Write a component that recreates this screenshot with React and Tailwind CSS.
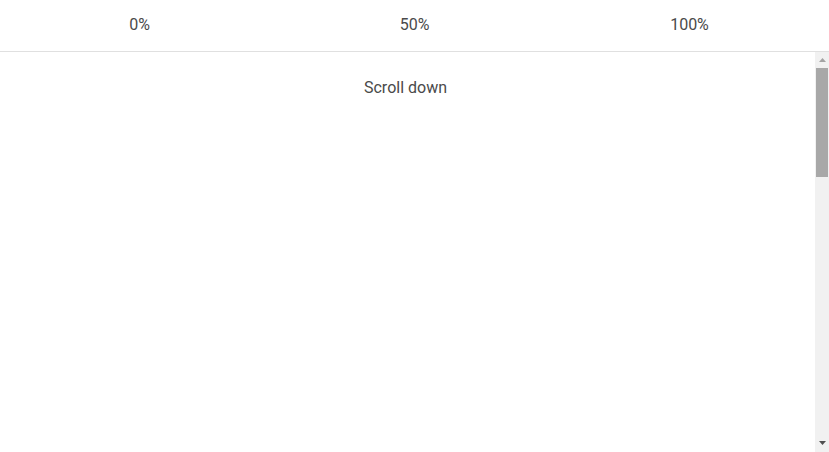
export default function App() {
  const marks = ['0%', '50%', '100%']

  return (
    <div className="h-[452px] w-full bg-white font-['Roboto',sans-serif] text-[#4a4a4a]">
      {/* Progress labels */}
      <div className="grid h-[52px] grid-cols-3 border-b border-[#e0e0e0] px-[2px] pb-[2px]">
        {marks.map(m => (
          <div key={m} className="flex items-center justify-center text-base">
            {m}
          </div>
        ))}
      </div>

      {/* Scroll area */}
      <div className="flex h-[400px]">
        <div className="flex-1 pr-[4px] pt-[24px] text-center text-base leading-6">
          Scroll down
        </div>

        {/* scrollbar */}
        <div className="flex w-[14px] flex-col bg-[#f1f1f1]">
          <div className="flex h-[16px] items-center justify-center">
            <svg width="7" height="4" viewBox="0 0 7 4">
              <path d="M3.5 0 L7 4 L0 4 Z" fill="#a3a3a3" />
            </svg>
          </div>
          <div className="mx-[1px] h-[109px] bg-[#a8a8a8]" />
          <div className="flex-1" />
          <div className="flex h-[16px] items-center justify-center pb-[2px]">
            <svg width="7" height="4" viewBox="0 0 7 4">
              <path d="M0 0 L7 0 L3.5 4 Z" fill="#505050" />
            </svg>
          </div>
        </div>
      </div>
    </div>
  )
}
